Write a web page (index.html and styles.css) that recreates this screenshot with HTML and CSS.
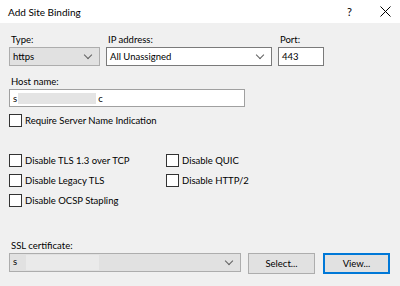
FILE: index.html
```html
<!DOCTYPE html>
<html>

<head>
    <title>Add Site Binding</title>
    <link rel="stylesheet" href="styles.css">
</head>

<body>
    <div class="title-bar">
        <span class="title">Add Site Binding</span>
        <span class="help">?</span>
        <span class="close">
            <svg width="11" height="11" viewBox="0 0 11 11">
                <path d="M0.5 0.5 L10.5 10.5 M10.5 0.5 L0.5 10.5" stroke="#000" stroke-width="1" fill="none" />
            </svg>
        </span>
    </div>

    <div class="dialog">
        <div class="top-row">
            <div class="field type-field">
                <label>Type:</label>
                <div class="select grey">
                    <span>https</span>
                    <span class="chevron"></span>
                </div>
            </div>
            <div class="field ip-field">
                <label>IP address:</label>
                <div class="select white">
                    <span>All Unassigned</span>
                    <span class="chevron"></span>
                </div>
            </div>
            <div class="field port-field">
                <label>Port:</label>
                <div class="input">443</div>
            </div>
        </div>

        <div class="field host-field">
            <label>Host name:</label>
            <div class="input host">
                <span>s</span><span class="blur host-blur"></span><span>c</span>
            </div>
        </div>

        <div class="check sni">
            <span class="box"></span>Require Server Name Indication
        </div>

        <div class="check-grid">
            <div class="check"><span class="box"></span>Disable TLS 1.3 over TCP</div>
            <div class="check"><span class="box"></span>Disable QUIC</div>
            <div class="check"><span class="box"></span>Disable Legacy TLS</div>
            <div class="check"><span class="box"></span>Disable HTTP/2</div>
            <div class="check"><span class="box"></span>Disable OCSP Stapling</div>
        </div>

        <div class="field ssl-field">
            <label>SSL certificate:</label>
            <div class="ssl-row">
                <div class="select grey ssl-select">
                    <span>s<span class="blur ssl-blur"></span></span>
                    <span class="chevron"></span>
                </div>
                <button class="btn">Select...</button>
                <button class="btn default">View...</button>
            </div>
        </div>
    </div>
</body>

</html>
```

FILE: styles.css
```css
body {
    margin: 0;
    padding: 0;
    background: #f0f0f0;
    font-family: Lato, "Noto Sans", sans-serif;
    font-size: 9.5px;
    color: #000000;
}

.title-bar {
    height: 23px;
    background: #ffffff;
    display: flex;
    align-items: center;
    padding-left: 8px;
    font-size: 10px;
}

.title {
    flex: 1;
}

.help {
    width: 10px;
    margin-right: 23px;
    font-size: 11px;
}

.close {
    width: 11px;
    margin-right: 9px;
    display: flex;
}

.dialog {
    padding: 0 9px;
}

.field label {
    display: block;
    height: 14px;
    line-height: 14px;
    padding-left: 2px;
}

.top-row {
    display: flex;
    gap: 6px;
    margin-top: 10px;
}

.type-field {
    width: 91px;
}

.ip-field {
    width: 166px;
}

.port-field {
    width: 46px;
}

.select,
.input {
    box-sizing: border-box;
    height: 19px;
    display: flex;
    align-items: center;
    padding: 0 3px;
}

.select {
    justify-content: space-between;
}

.select.grey {
    background: #e1e1e1;
    border: 1px solid #adadad;
}

.select.white {
    background: #ffffff;
    border: 1px solid #7a7a7a;
}

.input {
    background: #ffffff;
    border: 1px solid #7a7a7a;
}

.chevron {
    width: 5px;
    height: 5px;
    border-right: 1px solid #606060;
    border-bottom: 1px solid #606060;
    transform: rotate(45deg);
    margin: 0 5px 4px 0;
}

.host-field {
    margin-top: 9px;
}

.input.host {
    width: 236px;
    height: 18px;
    border-color: #a0a0a0;
}

.blur {
    display: inline-block;
    background: #e4e4e4;
    vertical-align: middle;
}

.host-blur {
    width: 78px;
    height: 11px;
    margin: 0 2px 0 1px;
}

.ssl-blur {
    width: 73px;
    height: 15px;
    margin-left: 9px;
    background: #eaeaea;
}

.check {
    display: flex;
    align-items: center;
    height: 20px;
}

.box {
    box-sizing: border-box;
    width: 13px;
    height: 13px;
    border: 1px solid #333333;
    background: #ffffff;
    margin-right: 3px;
}

.sni {
    margin-top: 3px;
}

.check-grid {
    display: grid;
    grid-template-columns: 157px auto;
    margin-top: 20px;
}

.ssl-field {
    margin-top: 29px;
}

.ssl-row {
    display: flex;
    align-items: flex-start;
}

.ssl-select {
    width: 232px;
}

.btn {
    box-sizing: border-box;
    height: 21px;
    width: 67px;
    margin-left: 7px;
    background: #e1e1e1;
    border: 1px solid #adadad;
    font-family: inherit;
    font-size: 9.5px;
    padding: 0;
}

.btn.default {
    margin-left: 8px;
    border: 2px solid #0078d7;
}
```
